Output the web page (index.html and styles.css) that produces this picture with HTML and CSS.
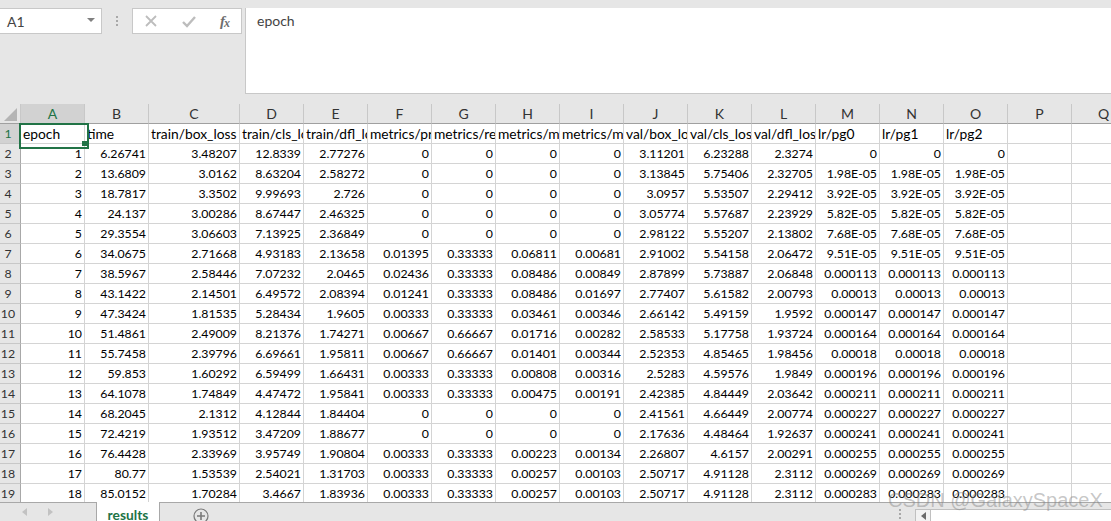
FILE: index.html
```html
<!DOCTYPE html>
<html lang="en">
<head>
<meta charset="utf-8">
<title>results</title>
<link rel="stylesheet" href="styles.css">
</head>
<body>
<div class="app">
  <div class="toolbar">
    <div class="namebox"><span>A1</span><i class="caret"></i></div>
    <div class="grip"><i></i><i></i><i></i></div>
    <div class="fxbox">
      <svg class="ico" width="14" height="14" viewBox="0 0 14 14"><path d="M2 2 L12 12 M12 2 L2 12" stroke="#bdbdbd" stroke-width="1.8" fill="none"/></svg>
      <svg class="ico" width="14" height="14" viewBox="0 0 14 14"><path d="M1 8 L5 12 L13 3" stroke="#bdbdbd" stroke-width="2.4" fill="none"/></svg>
      <span class="fx">f<sub>x</sub></span>
    </div>
    <div class="formula">epoch</div>
  </div>
  <div class="sheet">
    <table class="grid">
      <colgroup><col class="c-rh"><col class="c"><col class="c"><col class="c-w"><col class="c"><col class="c"><col class="c"><col class="c"><col class="c"><col class="c"><col class="c"><col class="c"><col class="c"><col class="c"><col class="c"><col class="c"><col class="c"><col class="c"></colgroup>
      <thead>
        <tr><th class="corner"><svg width="20" height="19" viewBox="0 0 20 19"><path d="M17 4 V17 H4 Z" fill="#b4b4b4"/></svg></th><th class="sel">A</th><th>B</th><th>C</th><th>D</th><th>E</th><th>F</th><th>G</th><th>H</th><th>I</th><th>J</th><th>K</th><th>L</th><th>M</th><th>N</th><th>O</th><th>P</th><th>Q</th></tr>
      </thead>
      <tbody>
        <tr class="txt"><th class="sel">1</th><td class="active">epoch</td><td>time</td><td>train/box_loss</td><td>train/cls_loss</td><td>train/dfl_loss</td><td>metrics/precision(B)</td><td>metrics/recall(B)</td><td>metrics/mAP50(B)</td><td>metrics/mAP50-95(B)</td><td>val/box_loss</td><td>val/cls_loss</td><td>val/dfl_loss</td><td>lr/pg0</td><td>lr/pg1</td><td>lr/pg2</td><td></td><td></td></tr>
        <tr><th>2</th><td>1</td><td>6.26741</td><td>3.48207</td><td>12.8339</td><td>2.77276</td><td>0</td><td>0</td><td>0</td><td>0</td><td>3.11201</td><td>6.23288</td><td>2.3274</td><td>0</td><td>0</td><td>0</td><td></td><td></td></tr>
        <tr><th>3</th><td>2</td><td>13.6809</td><td>3.0162</td><td>8.63204</td><td>2.58272</td><td>0</td><td>0</td><td>0</td><td>0</td><td>3.13845</td><td>5.75406</td><td>2.32705</td><td>1.98E-05</td><td>1.98E-05</td><td>1.98E-05</td><td></td><td></td></tr>
        <tr><th>4</th><td>3</td><td>18.7817</td><td>3.3502</td><td>9.99693</td><td>2.726</td><td>0</td><td>0</td><td>0</td><td>0</td><td>3.0957</td><td>5.53507</td><td>2.29412</td><td>3.92E-05</td><td>3.92E-05</td><td>3.92E-05</td><td></td><td></td></tr>
        <tr><th>5</th><td>4</td><td>24.137</td><td>3.00286</td><td>8.67447</td><td>2.46325</td><td>0</td><td>0</td><td>0</td><td>0</td><td>3.05774</td><td>5.57687</td><td>2.23929</td><td>5.82E-05</td><td>5.82E-05</td><td>5.82E-05</td><td></td><td></td></tr>
        <tr><th>6</th><td>5</td><td>29.3554</td><td>3.06603</td><td>7.13925</td><td>2.36849</td><td>0</td><td>0</td><td>0</td><td>0</td><td>2.98122</td><td>5.55207</td><td>2.13802</td><td>7.68E-05</td><td>7.68E-05</td><td>7.68E-05</td><td></td><td></td></tr>
        <tr><th>7</th><td>6</td><td>34.0675</td><td>2.71668</td><td>4.93183</td><td>2.13658</td><td>0.01395</td><td>0.33333</td><td>0.06811</td><td>0.00681</td><td>2.91002</td><td>5.54158</td><td>2.06472</td><td>9.51E-05</td><td>9.51E-05</td><td>9.51E-05</td><td></td><td></td></tr>
        <tr><th>8</th><td>7</td><td>38.5967</td><td>2.58446</td><td>7.07232</td><td>2.0465</td><td>0.02436</td><td>0.33333</td><td>0.08486</td><td>0.00849</td><td>2.87899</td><td>5.73887</td><td>2.06848</td><td>0.000113</td><td>0.000113</td><td>0.000113</td><td></td><td></td></tr>
        <tr><th>9</th><td>8</td><td>43.1422</td><td>2.14501</td><td>6.49572</td><td>2.08394</td><td>0.01241</td><td>0.33333</td><td>0.08486</td><td>0.01697</td><td>2.77407</td><td>5.61582</td><td>2.00793</td><td>0.00013</td><td>0.00013</td><td>0.00013</td><td></td><td></td></tr>
        <tr><th>10</th><td>9</td><td>47.3424</td><td>1.81535</td><td>5.28434</td><td>1.9605</td><td>0.00333</td><td>0.33333</td><td>0.03461</td><td>0.00346</td><td>2.66142</td><td>5.49159</td><td>1.9592</td><td>0.000147</td><td>0.000147</td><td>0.000147</td><td></td><td></td></tr>
        <tr><th>11</th><td>10</td><td>51.4861</td><td>2.49009</td><td>8.21376</td><td>1.74271</td><td>0.00667</td><td>0.66667</td><td>0.01716</td><td>0.00282</td><td>2.58533</td><td>5.17758</td><td>1.93724</td><td>0.000164</td><td>0.000164</td><td>0.000164</td><td></td><td></td></tr>
        <tr><th>12</th><td>11</td><td>55.7458</td><td>2.39796</td><td>6.69661</td><td>1.95811</td><td>0.00667</td><td>0.66667</td><td>0.01401</td><td>0.00344</td><td>2.52353</td><td>4.85465</td><td>1.98456</td><td>0.00018</td><td>0.00018</td><td>0.00018</td><td></td><td></td></tr>
        <tr><th>13</th><td>12</td><td>59.853</td><td>1.60292</td><td>6.59499</td><td>1.66431</td><td>0.00333</td><td>0.33333</td><td>0.00808</td><td>0.00316</td><td>2.5283</td><td>4.59576</td><td>1.9849</td><td>0.000196</td><td>0.000196</td><td>0.000196</td><td></td><td></td></tr>
        <tr><th>14</th><td>13</td><td>64.1078</td><td>1.74849</td><td>4.47472</td><td>1.95841</td><td>0.00333</td><td>0.33333</td><td>0.00475</td><td>0.00191</td><td>2.42385</td><td>4.84449</td><td>2.03642</td><td>0.000211</td><td>0.000211</td><td>0.000211</td><td></td><td></td></tr>
        <tr><th>15</th><td>14</td><td>68.2045</td><td>2.1312</td><td>4.12844</td><td>1.84404</td><td>0</td><td>0</td><td>0</td><td>0</td><td>2.41561</td><td>4.66449</td><td>2.00774</td><td>0.000227</td><td>0.000227</td><td>0.000227</td><td></td><td></td></tr>
        <tr><th>16</th><td>15</td><td>72.4219</td><td>1.93512</td><td>3.47209</td><td>1.88677</td><td>0</td><td>0</td><td>0</td><td>0</td><td>2.17636</td><td>4.48464</td><td>1.92637</td><td>0.000241</td><td>0.000241</td><td>0.000241</td><td></td><td></td></tr>
        <tr><th>17</th><td>16</td><td>76.4428</td><td>2.33969</td><td>3.95749</td><td>1.90804</td><td>0.00333</td><td>0.33333</td><td>0.00223</td><td>0.00134</td><td>2.26807</td><td>4.6157</td><td>2.00291</td><td>0.000255</td><td>0.000255</td><td>0.000255</td><td></td><td></td></tr>
        <tr><th>18</th><td>17</td><td>80.77</td><td>1.53539</td><td>2.54021</td><td>1.31703</td><td>0.00333</td><td>0.33333</td><td>0.00257</td><td>0.00103</td><td>2.50717</td><td>4.91128</td><td>2.3112</td><td>0.000269</td><td>0.000269</td><td>0.000269</td><td></td><td></td></tr>
        <tr><th>19</th><td>18</td><td>85.0152</td><td>1.70284</td><td>3.4667</td><td>1.83936</td><td>0.00333</td><td>0.33333</td><td>0.00257</td><td>0.00103</td><td>2.50717</td><td>4.91128</td><td>2.3112</td><td>0.000283</td><td>0.000283</td><td>0.000283</td><td></td><td></td></tr>
      </tbody>
    </table>
  </div>
  <div class="tabs">
    <div class="navs"><i class="arrow left"></i><i class="arrow right"></i></div>
    <div class="tab">results</div>
    <svg class="plus" width="16" height="16" viewBox="0 0 16 16"><circle cx="8" cy="8" r="7" fill="none" stroke="#7a7a7a" stroke-width="1.2"/><path d="M8 4 V12 M4 8 H12" stroke="#7a7a7a" stroke-width="1.6"/></svg>
    <div class="hgrip"><i></i><i></i><i></i></div>
    <div class="hscroll"><div class="hbtn"><i class="arrow left dark"></i></div><div class="hthumb"></div></div>
  </div>
  <div class="watermark">CSDN @GalaxySpaceX</div>
</div>
</body>
</html>
```
FILE: styles.css
```css
* { box-sizing: border-box; }
html, body { margin: 0; padding: 0; background: #e6e6e6; }
body { font-family: "Lato", "Liberation Sans", sans-serif; color: #000; }
.app { position: relative; width: 1111px; height: 521px; overflow: hidden; display: flex; flex-direction: column; }

/* formula bar */
.toolbar { flex: none; height: 104px; padding-top: 8px; display: flex; align-items: flex-start; background: #e6e6e6; }
.namebox { width: 102px; height: 26px; background: #fff; border: 1px solid #c8c8c8; border-left: 0; display: flex; align-items: center; justify-content: space-between; padding: 0 6px 0 7px; font-size: 14px; color: #444; }
.caret { width: 0; height: 0; border-left: 4px solid transparent; border-right: 4px solid transparent; border-top: 4px solid #808080; margin-top: -2px; }
.grip { width: 30px; height: 26px; display: flex; flex-direction: column; align-items: center; justify-content: center; gap: 2px; }
.grip i { width: 2px; height: 2px; background: #a8a8a8; }
.fxbox { width: 110px; height: 26px; background: #fff; border: 1px solid #c8c8c8; display: flex; align-items: center; padding: 0 12px 0 11px; justify-content: space-between; }
.ico { flex: none; }
.fx { font-family: "Liberation Serif", serif; font-style: italic; font-size: 15px; font-weight: bold; color: #6e6e6e; line-height: 1; letter-spacing: -1px; }
.fx sub { font-size: 12px; vertical-align: -1px; line-height: 0; }
.formula { flex: 1; height: 86px; margin-left: 3px; background: #fff; border: 1px solid #c8c8c8; border-right: 0; border-top: 0; padding: 5px 0 0 11px; font-size: 14px; color: #444; line-height: 16px; }

/* sheet */
.sheet { flex: none; height: 398px; overflow: hidden; background: #fff; }
.grid { border-collapse: separate; border-spacing: 0; table-layout: fixed; width: 1131px; font-size: 12.3px; color: #000; }
.c-rh { width: 21px; }
.c { width: 64px; }
.c-w { width: 91px; }
.grid th, .grid td { height: 20px; padding: 0; overflow: hidden; white-space: nowrap; line-height: 19px; }
.grid td { text-align: right; padding: 0 2px 0 2px; background: #fff; border-right: 1px solid #d4d4d4; border-bottom: 1px solid #d4d4d4; }
.grid .txt td { text-align: left; padding-left: 2px; padding-right: 0; font-size: 13.8px; }
.grid th { font-weight: normal; background: #e6e6e6; color: #333; text-align: center; }
.grid thead th { height: 20px; border-right: 1px solid #c8c8c8; border-bottom: 1px solid #a0a0a0; font-size: 14px; }
.grid tbody th { text-align: center; padding-right: 4px; border-right: 1px solid #a8a8a8; border-bottom: 1px solid #c8c8c8; font-size: 12.3px; }
.grid th.sel { background: #d2d2d2; color: #217346; }
.grid .corner { padding: 0; line-height: 0; }
.corner svg { display: block; }
.grid td.active { position: relative; overflow: visible; padding-left: 2px; }
.active::after { content: ""; position: absolute; left: -2px; top: -1px; width: 66px; height: 22px; border: 2px solid #217346; pointer-events: none; }
.active::before { content: ""; position: absolute; right: -3px; bottom: -3px; width: 5px; height: 5px; background: #217346; z-index: 1; }

/* tabs */
.tabs { flex: none; height: 19px; display: flex; align-items: flex-start; background: #e6e6e6; border-top: 1px solid #a8a8a8; position: relative; }
.navs { width: 96px; height: 18px; display: flex; align-items: center; gap: 21px; padding-left: 22px; }
.arrow { width: 0; height: 0; border-top: 4px solid transparent; border-bottom: 4px solid transparent; }
.arrow.left { border-right: 5px solid #c2c2c2; }
.arrow.right { border-left: 5px solid #c2c2c2; }
.arrow.left.dark { border-right-color: #6a6a6a; }
.tab { width: 64px; height: 19px; margin-top: -1px; background: #fff; border-left: 1px solid #a8a8a8; border-right: 1px solid #a8a8a8; color: #217346; font-weight: bold; font-size: 13.8px; text-align: center; line-height: 25px; }
.plus { flex: none; margin: 5px 0 0 33px; }
.hgrip { margin-left: auto; width: 6px; height: 18px; display: flex; flex-direction: column; align-items: center; justify-content: flex-end; gap: 2px; margin-right: 12px; padding-bottom: 2px; }
.hgrip i { width: 2px; height: 2px; background: #a8a8a8; }
.hscroll { width: 196px; height: 12px; margin-top: 6px; display: flex; }
.hbtn { width: 16px; height: 12px; background: #f2f2f2; border: 1px solid #c0c0c0; border-bottom: 0; display: flex; align-items: center; justify-content: center; }
.hthumb { flex: 1; background: #fff; border-top: 1px solid #c0c0c0; }

/* overlay */
.watermark { position: absolute; left: 888px; top: 487px; font-family: "Liberation Sans", sans-serif; font-size: 20px; line-height: 26px; color: rgba(130, 130, 130, .45); white-space: nowrap; pointer-events: none; }
```
